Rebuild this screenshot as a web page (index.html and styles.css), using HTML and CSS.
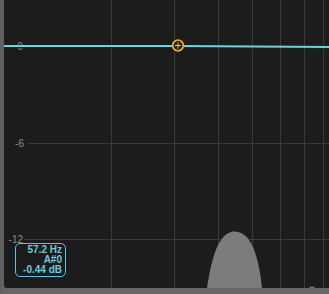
FILE: index.html
```html
<!DOCTYPE html>
<html lang="en">
<head>
    <meta charset="UTF-8">
    <title>EQ Curve</title>
    <link rel="stylesheet" href="styles.css">
</head>
<body>
    <div class="panel">
        <div class="plot">
            <svg class="graph" width="325" height="288" viewBox="4 0 325 288">
                <!-- grid -->
                <g class="grid">
                    <line x1="111.5" y1="0" x2="111.5" y2="288"/>
                    <line x1="174.5" y1="0" x2="174.5" y2="288"/>
                    <line x1="218.5" y1="0" x2="218.5" y2="288"/>
                    <line x1="252.5" y1="0" x2="252.5" y2="288"/>
                    <line x1="280.5" y1="0" x2="280.5" y2="288"/>
                    <line x1="304.5" y1="0" x2="304.5" y2="288"/>
                    <line x1="323.5" y1="0" x2="323.5" y2="288"/>
                    <line x1="28" y1="143.5" x2="329" y2="143.5"/>
                    <line x1="24" y1="239.5" x2="329" y2="239.5"/>
                </g>

                <!-- spectrum -->
                <path class="spectrum" d="M207,288 C211,262 217,236 231,232 C240,230 247,236 251,243 C256,252 260,268 262,288 Z"/>
                <circle class="spectrum" cx="312" cy="290" r="3.5"/>

                <!-- db labels -->
                <text class="db" x="23" y="50">0</text>
                <text class="db" x="24" y="147">-6</text>
                <text class="db" x="23" y="243">-12</text>

                <!-- eq curve -->
                <path class="curve-shadow" d="M4,47 L180,47 C240,47 290,47.5 329,48"/>
                <path class="curve" d="M4,46 L180,46 C240,46 290,46.5 329,47"/>

                <!-- band handle -->
                <g class="handle">
                    <circle cx="178" cy="45.5" r="5.3"/>
                    <line x1="178" y1="42.5" x2="178" y2="48.5"/>
                    <line x1="175" y1="45.5" x2="181" y2="45.5"/>
                </g>
            </svg>

            <div class="readout">
                <div>57.2 Hz</div>
                <div>A#0</div>
                <div>-0.44 dB</div>
            </div>
        </div>
    </div>
</body>
</html>
```

FILE: styles.css
```css
* {
    margin: 0;
    padding: 0;
    box-sizing: border-box;
}

body {
    background: #5e615f;
    font-family: 'Liberation Sans', Arial, sans-serif;
    overflow: hidden;
}

.panel {
    width: 329px;
    height: 294px;
    border-left: 4px solid #5e615f;
    border-bottom: 6px solid #646765;
}

.plot {
    position: relative;
    width: 325px;
    height: 288px;
    background: #1c1c1c;
    border-bottom-left-radius: 3px;
    overflow: hidden;
}

.graph {
    display: block;
}

.grid line {
    stroke: #3a3a3a;
    stroke-width: 1;
}

.spectrum {
    fill: #7a7d7b;
}

.db {
    fill: #8c8c8c;
    font-size: 10px;
    text-anchor: end;
}

.curve-shadow {
    fill: none;
    stroke: #102a30;
    stroke-width: 2;
}

.curve {
    fill: none;
    stroke: #74cfdf;
    stroke-width: 1.8;
}

.handle circle {
    fill: #1c1c1c;
    stroke: #e3ab1f;
    stroke-width: 1.8;
}

.handle line {
    stroke: #e8c070;
    stroke-width: 1;
}

/* hover readout sits over the plot */
.readout {
    position: absolute;
    left: 11px;
    top: 243px;
    width: 51px;
    height: 34px;
    padding: 1px 3px 0 0;
    border: 1px solid #5cc3d8;
    border-radius: 5px;
    background: #1c1c1c;
    color: #6ccbdc;
    font-size: 10px;
    font-weight: bold;
    line-height: 10px;
    text-align: right;
}
```
